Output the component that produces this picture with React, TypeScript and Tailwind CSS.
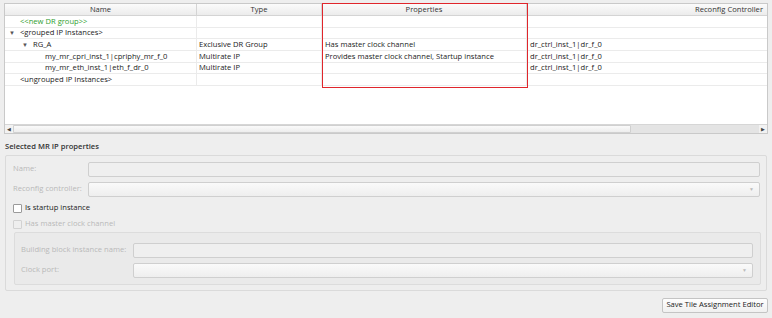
import React from 'react';

type Row = { name: string; indent: number; arrow?: boolean; green?: boolean; type?: string; props?: string; ctrl?: string };

const ROWS: Row[] = [
  { name: '<<new DR group>>', indent: 15, green: true },
  { name: '<grouped IP Instances>', indent: 15, arrow: true },
  { name: 'RG_A', indent: 28, arrow: true, type: 'Exclusive DR Group', props: 'Has master clock channel', ctrl: 'dr_ctrl_inst_1|dr_f_0' },
  { name: 'my_mr_cpri_inst_1|cpriphy_mr_f_0', indent: 40, type: 'Multirate IP', props: 'Provides master clock channel, Startup instance', ctrl: 'dr_ctrl_inst_1|dr_f_0' },
  { name: 'my_mr_eth_inst_1|eth_f_dr_0', indent: 40, type: 'Multirate IP', ctrl: 'dr_ctrl_inst_1|dr_f_0' },
  { name: '<ungrouped IP Instances>', indent: 15 },
];

const COLS = 'grid grid-cols-[192px_125px_205px_1fr]';

const TreeTable: React.FC = () => (
  <div className="relative ml-[4px] mt-[3px] w-[764px] h-[131px] border border-[#c9c9c9] bg-white flex flex-col">
    <div className={`${COLS} h-[12px] bg-gradient-to-b from-[#fbfbfb] to-[#ececec] border-b border-[#d4d4d4] text-[#333]`}>
      <div className="flex items-center justify-center border-r border-[#d4d4d4]">Name</div>
      <div className="flex items-center justify-center border-r border-[#d4d4d4]">Type</div>
      <div className="flex items-center justify-center border-r border-[#d4d4d4]">Properties</div>
      <div className="flex items-center justify-end pr-[4px]">Reconfig Controller</div>
    </div>
    {ROWS.map((r) => (
      <div key={r.name} className={`${COLS} h-[11.7px] border-b border-[#ebebeb] text-[#222]`}>
        <div className="relative flex items-center border-r border-[#ebebeb]" style={{ paddingLeft: r.indent }}>
          {r.arrow && <span className="absolute text-[6px] text-[#555]" style={{ left: r.indent - 11 }}>▼</span>}
          <span className={r.green ? 'text-[#2f9e2f]' : ''}>{r.name}</span>
        </div>
        <div className="flex items-center pl-[2px] border-r border-[#ebebeb]">{r.type}</div>
        <div className="flex items-center pl-[3px] border-r border-[#ebebeb]">{r.props}</div>
        <div className="flex items-center pl-[3px]">{r.ctrl}</div>
      </div>
    ))}
    <div className="flex-1" />
    <div className="h-[9px] flex items-stretch border-t border-[#d6d6d6] bg-[#e4e4e4]">
      <div className="w-[8px] flex items-center justify-center text-[5px] text-[#444] bg-[#f2f2f2]">◀</div>
      <div className="w-[618px] bg-gradient-to-b from-[#fafafa] to-[#ededed] border border-[#d0d0d0] rounded-[1px]" />
      <div className="flex-1" />
      <div className="w-[8px] flex items-center justify-center text-[5px] text-[#444] bg-[#f2f2f2]">▶</div>
    </div>
    <div className="absolute left-[317px] top-[-1px] w-[206px] h-[85px] border border-[#e0262c]" />
  </div>
);

const Field: React.FC<{ combo?: boolean; className?: string }> = ({ combo, className }) => (
  <div className={`h-[15px] flex-1 border border-[#cfcfcf] rounded-[2px] flex items-center justify-end pr-[5px] ${combo ? 'bg-gradient-to-b from-[#fafafa] to-[#eeeeee]' : 'bg-[#efefef]'} ${className ?? ''}`}>
    {combo && <span className="text-[5px] text-[#bbb]">▼</span>}
  </div>
);

const Check: React.FC<{ label: string; disabled?: boolean }> = ({ label, disabled }) => (
  <div className="flex items-center h-[9px] pl-[7px] gap-[3px]">
    <div className={`w-[9px] h-[9px] border rounded-[1px] ${disabled ? 'border-[#d2d2d2] bg-[#eeeeee]' : 'border-[#9a9a9a] bg-white'}`} />
    <span className={disabled ? 'text-[#b9b9b9]' : 'text-[#222]'}>{label}</span>
  </div>
);

export default function App() {
  return (
    <div className="w-[772px] h-[318px] bg-[#eeeeee] flex flex-col text-[7.6px] font-['Open_Sans',sans-serif] leading-none overflow-hidden">
      <TreeTable />
      <div className="ml-[5px] mt-[9px] text-[#333] font-semibold">Selected MR IP properties</div>
      <div className="ml-[5px] mt-[4px] w-[762px] h-[136px] border border-[#dadada] rounded-[2px] flex flex-col pt-[6px]">
        <div className="flex items-center pl-[7px] pr-[6px]">
          <span className="w-[75px] text-[#b9b9b9]">Name:</span>
          <Field />
        </div>
        <div className="flex items-center pl-[7px] pr-[6px] mt-[5px]">
          <span className="w-[75px] text-[#b9b9b9]">Reconfig controller:</span>
          <Field combo />
        </div>
        <div className="mt-[7px]"><Check label="Is startup instance" /></div>
        <div className="mt-[7px]"><Check label="Has master clock channel" disabled /></div>
        <div className="ml-[8px] mr-[5px] mt-[3px] h-[53px] border border-[#dcdcdc] bg-[#eaeaea] rounded-[2px] flex flex-col pt-[10px]">
          <div className="flex items-center pl-[6px] pr-[7px]">
            <span className="w-[112px] text-[#b9b9b9]">Building block instance name:</span>
            <Field />
          </div>
          <div className="flex items-center pl-[6px] pr-[7px] mt-[5px]">
            <span className="w-[112px] text-[#b9b9b9]">Clock port:</span>
            <Field combo />
          </div>
        </div>
      </div>
      <div className="flex justify-end mr-[4px] mt-[7px]">
        <button className="h-[15px] w-[106px] border border-[#c4c4c4] rounded-[2px] bg-gradient-to-b from-[#fefefe] to-[#f0f0f0] text-[#222]">
          Save Tile Assignment Editor
        </button>
      </div>
    </div>
  );
}
